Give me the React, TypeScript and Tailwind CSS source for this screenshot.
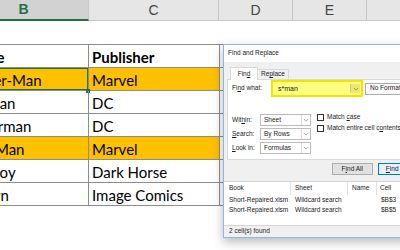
const rows = [
  { name: "Spider-Man", pub: "Marvel", hit: true, active: true },
  { name: "Batman", pub: "DC" },
  { name: "Superman", pub: "DC" },
  { name: "Iron Man", pub: "Marvel", hit: true },
  { name: "Hellboy", pub: "Dark Horse" },
  { name: "Spawn", pub: "Image Comics" },
];

function Chevron({ className = "" }: { className?: string }) {
  return (
    <svg viewBox="0 0 8 5" className={className}>
      <path d="M1 1l3 3 3-3" fill="none" stroke="currentColor" strokeWidth="1" />
    </svg>
  );
}

function Select({ value }: { value: string }) {
  return (
    <div className="flex h-[12px] w-[51px] border border-[#bcbcbc] bg-white">
      <span className="flex flex-1 items-center pl-[3px]">{value}</span>
      <span className="flex w-[9px] items-center justify-center border-l border-[#dcdcdc] text-[#8a8a8a]">
        <Chevron className="h-[4px] w-[6px]" />
      </span>
    </div>
  );
}

function Check({ children }: { children: React.ReactNode }) {
  return (
    <div className="flex h-[7px] items-center gap-[3px]">
      <span className="h-[7px] w-[7px] shrink-0 border border-[#333] bg-white" />
      <span className="whitespace-nowrap">{children}</span>
    </div>
  );
}

function FindDialog() {
  return (
    <div className="absolute left-[223px] top-[44px] flex h-[194px] w-[200px] flex-col border border-[#8fb6df] bg-[#f0f0f0] font-['Liberation_Sans',sans-serif] text-[6.5px] leading-none text-[#1a1a1a] shadow-[0_4px_10px_rgba(0,0,0,0.28)]">
      <div className="flex h-[17px] shrink-0 items-center bg-white pl-[4px]">Find and Replace</div>

      <div className="flex shrink-0 items-end pl-[6px] pt-[5px]">
        <div className="relative z-10 -mb-px flex h-[13px] w-[28px] items-center justify-center border border-b-0 border-[#d9d9d9] bg-white">
          Fin<u>d</u>
        </div>
        <div className="flex h-[10px] w-[31px] items-center justify-center border border-b-0 border-l-0 border-[#d9d9d9]">
          Re<u>p</u>lace
        </div>
      </div>

      <div className="ml-[3px] h-[81px] shrink-0 border border-[#d9d9d9] bg-white">
        <div className="flex h-[17px] items-center">
          <span className="w-[43px] pl-[4px]">
            Fi<u>n</u>d what:
          </span>
          <div className="flex h-[17px] w-[92px] border-2 border-[#f2e400] bg-[#ffff80]">
            <span className="flex flex-1 items-center pl-[5px] text-[7px]">s*man</span>
            <span className="my-[2px] mr-[1px] flex w-[10px] items-center justify-center border-l border-[#d8d070] bg-[#eee873] text-[#777]">
              <Chevron className="h-[4px] w-[6px]" />
            </span>
          </div>
          <div className="ml-[2px] flex h-[12px] items-center whitespace-nowrap border border-[#adadad] bg-[#fbfbfb] px-[4px]">
            No Format Set
          </div>
        </div>

        <div className="mt-[17px] flex">
          <div className="flex flex-col gap-[2px] pl-[4px]">
            <div className="flex items-center">
              <span className="w-[28px]">
                Wit<u>h</u>in:
              </span>
              <Select value="Sheet" />
            </div>
            <div className="flex items-center">
              <span className="w-[28px]">
                <u>S</u>earch:
              </span>
              <Select value="By Rows" />
            </div>
            <div className="flex items-center">
              <span className="w-[28px]">
                <u>L</u>ook in:
              </span>
              <Select value="Formulas" />
            </div>
          </div>
          <div className="ml-[6px] flex flex-col gap-[4px]">
            <Check>
              Match <u>c</u>ase
            </Check>
            <Check>
              Match entire cell c<u>o</u>ntents
            </Check>
          </div>
        </div>
      </div>

      <div className="flex shrink-0 gap-[5px] pl-[108px] pt-[3px]">
        <div className="flex h-[12px] w-[41px] items-center justify-center border border-[#adadad] bg-[#e1e1e1]">
          F<u>i</u>nd All
        </div>
        <div className="flex h-[12px] w-[45px] items-center justify-center border border-[#0078d7] bg-[#e5f1fb]">
          <u>F</u>ind Next
        </div>
      </div>

      <div className="mt-[6px] h-[44px] shrink-0 border-t border-[#d5d5d5] bg-white">
        <div className="flex h-[13px]">
          <span className="flex w-[67px] items-center border-r border-[#e3e3e3] pl-[5px]">Book</span>
          <span className="flex w-[57px] items-center border-r border-[#e3e3e3] pl-[4px]">Sheet</span>
          <span className="flex w-[29px] items-center border-r border-[#e3e3e3] pl-[4px]">Name</span>
          <span className="flex flex-1 items-center pl-[3px]">Cell</span>
        </div>
        {["$B$3", "$B$5"].map((cell) => (
          <div key={cell} className="flex h-[10px] items-center">
            <span className="w-[67px] pl-[5px]">Short-Repaired.xlsm</span>
            <span className="w-[57px] pl-[4px]">Wildcard search</span>
            <span className="w-[29px]" />
            <span className="pl-[4px]">{cell}</span>
          </div>
        ))}
      </div>

      <div className="flex flex-1 items-center border-t border-[#d5d5d5] pl-[5px]">2 cell(s) found</div>
    </div>
  );
}

export default function App() {
  return (
    <div className="relative h-[250px] w-[400px] overflow-hidden bg-white">
      <div className="flex h-[21px] font-['Liberation_Sans',sans-serif] text-[14px] text-[#444]">
        <div className="-ml-[38px] flex w-[127px] shrink-0 items-center justify-center border-b-2 border-r border-[#c6c6c6] border-b-[#217346] bg-[#d2d2d2] pr-[3px] font-bold text-[#217346]">
          B
        </div>
        <div className="flex w-[130px] shrink-0 items-center justify-center border-b border-r border-[#c6c6c6] bg-[#e6e6e6]">
          C
        </div>
        <div className="flex w-[74px] shrink-0 items-center justify-center border-b border-r border-[#c6c6c6] bg-[#e6e6e6]">
          D
        </div>
        <div className="flex w-[74px] shrink-0 items-center justify-center border-b border-r border-[#c6c6c6] bg-[#e6e6e6]">
          E
        </div>
        <div className="flex-1 border-b border-[#c6c6c6] bg-[#e6e6e6]" />
      </div>

      <div className="h-[23px]" />

      <div className="flex flex-col border-t border-[#8c8c8c] font-['Lato',sans-serif] text-[15px] leading-[18px] text-black">
        <div className="flex h-[23px] border-b border-[#8c8c8c]">
          <div className="-ml-[38px] flex w-[127px] shrink-0 items-end border-r border-[#8c8c8c] pb-[1px] pl-[3px] font-bold">
            Name
          </div>
          <div className="flex w-[131px] shrink-0 items-end border-r border-[#8c8c8c] pb-[1px] pl-[3px] font-bold">
            Publisher
          </div>
        </div>
        {rows.map((r) => (
          <div key={r.name} className="flex h-[23px] border-b border-[#8c8c8c]">
            <div
              className={`relative -ml-[38px] flex w-[127px] shrink-0 items-end overflow-hidden whitespace-nowrap border-r border-[#8c8c8c] pb-[1px] pl-[3px] ${r.hit ? "bg-[#ffc000]" : ""}`}
            >
              {r.name}
              {r.active && <span className="absolute inset-0 border border-[#217346]" />}
            </div>
            <div
              className={`relative flex w-[131px] shrink-0 items-end border-r border-[#8c8c8c] pb-[1px] pl-[3px] ${r.hit ? "bg-[#ffc000]" : ""}`}
            >
              {r.active && <span className="absolute -bottom-[3px] -left-[3px] h-[4px] w-[4px] bg-[#217346]" />}
              {r.pub}
            </div>
          </div>
        ))}
      </div>

      <FindDialog />
    </div>
  );
}
